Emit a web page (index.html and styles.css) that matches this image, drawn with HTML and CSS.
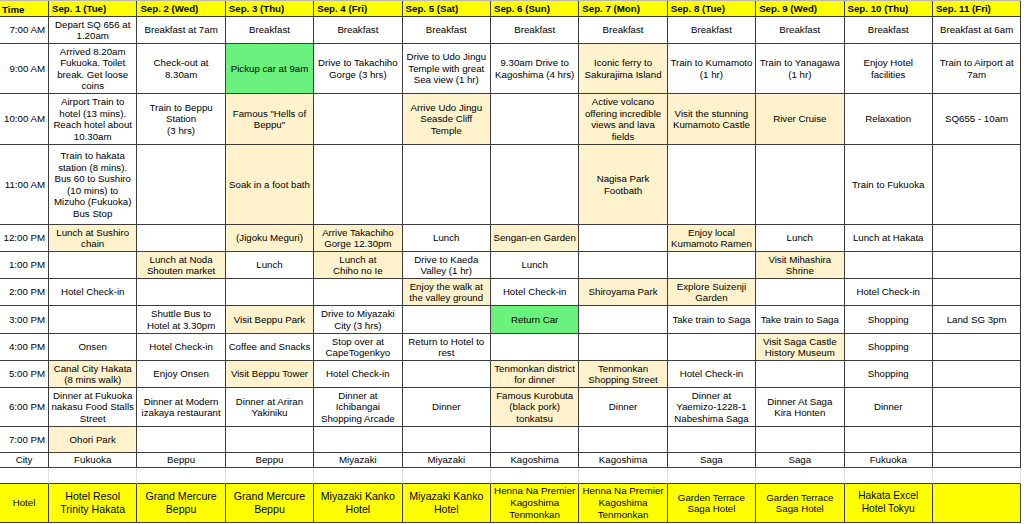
FILE: index.html
```html
<!DOCTYPE html>
<html lang="en">
<head>
<meta charset="utf-8">
<title>Japan Itinerary</title>
<link rel="stylesheet" href="styles.css">
</head>
<body>
<div class="sheet">
  <div class="c hd time-hd">Time</div>
  <div class="c hd">Sep. 1 (Tue)</div>
  <div class="c hd">Sep. 2 (Wed)</div>
  <div class="c hd">Sep. 3 (Thu)</div>
  <div class="c hd">Sep. 4 (Fri)</div>
  <div class="c hd">Sep. 5 (Sat)</div>
  <div class="c hd">Sep. 6 (Sun)</div>
  <div class="c hd">Sep. 7 (Mon)</div>
  <div class="c hd">Sep. 8 (Tue)</div>
  <div class="c hd">Sep. 9 (Wed)</div>
  <div class="c hd">Sep. 10 (Thu)</div>
  <div class="c hd">Sep. 11 (Fri)</div>

  <div class="c t">7:00 AM</div>
  <div class="c">Depart SQ 656 at<br>1.20am</div>
  <div class="c">Breakfast at 7am</div>
  <div class="c">Breakfast</div>
  <div class="c">Breakfast</div>
  <div class="c">Breakfast</div>
  <div class="c">Breakfast</div>
  <div class="c">Breakfast</div>
  <div class="c">Breakfast</div>
  <div class="c">Breakfast</div>
  <div class="c">Breakfast</div>
  <div class="c">Breakfast at 6am</div>

  <div class="c t">9:00 AM</div>
  <div class="c">Arrived 8.20am<br>Fukuoka. Toilet<br>break. Get loose<br>coins</div>
  <div class="c">Check-out at<br>8.30am</div>
  <div class="c g">Pickup car at 9am</div>
  <div class="c">Drive to Takachiho<br>Gorge (3 hrs)</div>
  <div class="c">Drive to Udo Jingu<br>Temple with great<br>Sea view (1 hr)</div>
  <div class="c">9.30am Drive to<br>Kagoshima (4 hrs)</div>
  <div class="c o">Iconic ferry to<br>Sakurajima Island</div>
  <div class="c">Train to Kumamoto<br>(1 hr)</div>
  <div class="c">Train to Yanagawa<br>(1 hr)</div>
  <div class="c">Enjoy Hotel<br>facilities</div>
  <div class="c">Train to Airport at<br>7am</div>

  <div class="c t">10:00 AM</div>
  <div class="c">Airport Train to<br>hotel (13 mins).<br>Reach hotel about<br>10.30am</div>
  <div class="c">Train to Beppu<br>Station<br>(3 hrs)</div>
  <div class="c o">Famous "Hells of<br>Beppu"</div>
  <div class="c"></div>
  <div class="c o">Arrive Udo Jingu<br>Seasde Cliff<br>Temple</div>
  <div class="c"></div>
  <div class="c o">Active volcano<br>offering incredible<br>views and lava<br>fields</div>
  <div class="c o">Visit the stunning<br>Kumamoto Castle</div>
  <div class="c o">River Cruise</div>
  <div class="c">Relaxation</div>
  <div class="c">SQ655 - 10am</div>

  <div class="c t">11:00 AM</div>
  <div class="c">Train to hakata<br>station (8 mins).<br>Bus 60 to Sushiro<br>(10 mins) to<br>Mizuho (Fukuoka)<br>Bus Stop</div>
  <div class="c"></div>
  <div class="c o">Soak in a foot bath</div>
  <div class="c"></div>
  <div class="c"></div>
  <div class="c"></div>
  <div class="c o">Nagisa Park<br>Footbath</div>
  <div class="c"></div>
  <div class="c"></div>
  <div class="c">Train to Fukuoka</div>
  <div class="c"></div>

  <div class="c t">12:00 PM</div>
  <div class="c o">Lunch at Sushiro<br>chain</div>
  <div class="c"></div>
  <div class="c o">(Jigoku Meguri)</div>
  <div class="c o">Arrive Takachiho<br>Gorge 12.30pm</div>
  <div class="c">Lunch</div>
  <div class="c o">Sengan-en Garden</div>
  <div class="c"></div>
  <div class="c o">Enjoy local<br>Kumamoto Ramen</div>
  <div class="c">Lunch</div>
  <div class="c">Lunch at Hakata</div>
  <div class="c"></div>

  <div class="c t">1:00 PM</div>
  <div class="c"></div>
  <div class="c o">Lunch at Noda<br>Shouten market</div>
  <div class="c">Lunch</div>
  <div class="c o">Lunch at<br>Chiho no Ie</div>
  <div class="c">Drive to Kaeda<br>Valley (1 hr)</div>
  <div class="c">Lunch</div>
  <div class="c"></div>
  <div class="c"></div>
  <div class="c o">Visit Mihashira<br>Shrine</div>
  <div class="c"></div>
  <div class="c"></div>

  <div class="c t">2:00 PM</div>
  <div class="c">Hotel Check-in</div>
  <div class="c"></div>
  <div class="c"></div>
  <div class="c"></div>
  <div class="c o">Enjoy the walk at<br>the valley ground</div>
  <div class="c">Hotel Check-in</div>
  <div class="c o">Shiroyama Park</div>
  <div class="c o">Explore Suizenji<br>Garden</div>
  <div class="c"></div>
  <div class="c">Hotel Check-in</div>
  <div class="c"></div>

  <div class="c t">3:00 PM</div>
  <div class="c"></div>
  <div class="c">Shuttle Bus to<br>Hotel at 3.30pm</div>
  <div class="c o">Visit Beppu Park</div>
  <div class="c">Drive to Miyazaki<br>City (3 hrs)</div>
  <div class="c"></div>
  <div class="c g">Return Car</div>
  <div class="c"></div>
  <div class="c">Take train to Saga</div>
  <div class="c">Take train to Saga</div>
  <div class="c">Shopping</div>
  <div class="c">Land SG 3pm</div>

  <div class="c t">4:00 PM</div>
  <div class="c">Onsen</div>
  <div class="c">Hotel Check-in</div>
  <div class="c">Coffee and Snacks</div>
  <div class="c">Stop over at<br>CapeTogenkyo</div>
  <div class="c">Return to Hotel to<br>rest</div>
  <div class="c"></div>
  <div class="c"></div>
  <div class="c"></div>
  <div class="c o">Visit Saga Castle<br>History Museum</div>
  <div class="c">Shopping</div>
  <div class="c"></div>

  <div class="c t">5:00 PM</div>
  <div class="c o">Canal City Hakata<br>(8 mins walk)</div>
  <div class="c">Enjoy Onsen</div>
  <div class="c o">Visit Beppu Tower</div>
  <div class="c">Hotel Check-in</div>
  <div class="c"></div>
  <div class="c o">Tenmonkan district<br>for dinner</div>
  <div class="c o">Tenmonkan<br>Shopping Street</div>
  <div class="c">Hotel Check-in</div>
  <div class="c"></div>
  <div class="c">Shopping</div>
  <div class="c"></div>

  <div class="c t">6:00 PM</div>
  <div class="c">Dinner at Fukuoka<br>nakasu Food Stalls<br>Street</div>
  <div class="c">Dinner at Modern<br>izakaya restaurant</div>
  <div class="c">Dinner at Ariran<br>Yakiniku</div>
  <div class="c">Dinner at<br>Ichibangai<br>Shopping Arcade</div>
  <div class="c">Dinner</div>
  <div class="c o">Famous Kurobuta<br>(black pork)<br>tonkatsu</div>
  <div class="c">Dinner</div>
  <div class="c">Dinner at<br>Yaemizo-1228-1<br>Nabeshima Saga</div>
  <div class="c">Dinner At Saga<br>Kira Honten</div>
  <div class="c">Dinner</div>
  <div class="c"></div>

  <div class="c t">7:00 PM</div>
  <div class="c o">Ohori Park</div>
  <div class="c"></div>
  <div class="c"></div>
  <div class="c"></div>
  <div class="c"></div>
  <div class="c"></div>
  <div class="c"></div>
  <div class="c"></div>
  <div class="c"></div>
  <div class="c"></div>
  <div class="c"></div>

  <div class="c">City</div>
  <div class="c">Fukuoka</div>
  <div class="c">Beppu</div>
  <div class="c">Beppu</div>
  <div class="c">Miyazaki</div>
  <div class="c">Miyazaki</div>
  <div class="c">Kagoshima</div>
  <div class="c">Kagoshima</div>
  <div class="c">Saga</div>
  <div class="c">Saga</div>
  <div class="c">Fukuoka</div>
  <div class="c"></div>

  <div class="c gap"></div>
  <div class="c gap"></div>
  <div class="c gap"></div>
  <div class="c gap"></div>
  <div class="c gap"></div>
  <div class="c gap"></div>
  <div class="c gap"></div>
  <div class="c gap"></div>
  <div class="c gap"></div>
  <div class="c gap"></div>
  <div class="c gap"></div>
  <div class="c gap"></div>

  <div class="c y">Hotel</div>
  <div class="c y big">Hotel Resol<br>Trinity Hakata</div>
  <div class="c y big">Grand Mercure<br>Beppu</div>
  <div class="c y big">Grand Mercure<br>Beppu</div>
  <div class="c y big">Miyazaki Kanko<br>Hotel</div>
  <div class="c y big">Miyazaki Kanko<br>Hotel</div>
  <div class="c y mid">Henna Na Premier<br>Kagoshima<br>Tenmonkan</div>
  <div class="c y mid">Henna Na Premier<br>Kagoshima<br>Tenmonkan</div>
  <div class="c y">Garden Terrace<br>Saga Hotel</div>
  <div class="c y">Garden Terrace<br>Saga Hotel</div>
  <div class="c y med">Hakata Excel<br>Hotel Tokyu</div>
  <div class="c y"></div>
</div>
</body>
</html>
```

FILE: styles.css
```css
html, body {
  margin: 0;
  padding: 0;
  background: #ffffff;
}

body {
  font-family: "Liberation Sans", Arial, sans-serif;
  color: #000;
}

.sheet {
  display: grid;
  width: 1021.4px;
  grid-template-columns: 49px repeat(11, 88.4px);
  grid-template-rows: 16px 27px 50px 51px 80px 27px 27px 27px 28px 27px 27px 39px 26px 15px 16px 39px;
  border-top: 1px solid #b8b8b8;
  font-size: 9.7px;
  line-height: 11.5px;
}

.c {
  box-sizing: border-box;
  display: flex;
  align-items: center;
  justify-content: center;
  text-align: center;
  padding: 0 1px;
  border-right: 1px solid #3d3d3d;
  border-bottom: 1px solid #3d3d3d;
  overflow: hidden;
  white-space: nowrap;
}

.hd {
  background: #ffff00;
  font-weight: bold;
  justify-content: flex-start;
  padding-left: 3px;
  padding-top: 1px;
}

.time-hd {
  padding-left: 2px;
  padding-top: 3px;
}

.t {
  justify-content: flex-end;
  padding-right: 3px;
}

.o {
  background: #fff2cc;
}

.g {
  background: #6bf27e;
}

.y {
  background: #ffff00;
}

.big {
  font-size: 10.6px;
  line-height: 13px;
}

.med {
  font-size: 10.2px;
  line-height: 12.7px;
}

.mid {
  font-size: 9.8px;
  line-height: 12.2px;
}

.gap {
  border-right-color: #e2e2e2;
}
```
